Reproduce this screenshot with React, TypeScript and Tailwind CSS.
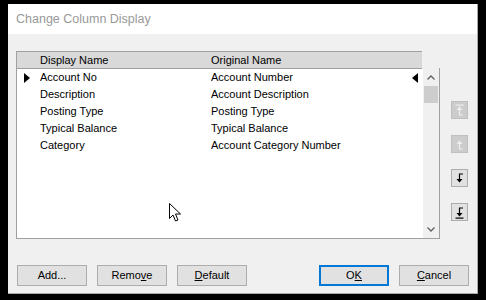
import React from 'react'

const rows = [
  { display: 'Account No', original: 'Account Number' },
  { display: 'Description', original: 'Account Description' },
  { display: 'Posting Type', original: 'Posting Type' },
  { display: 'Typical Balance', original: 'Typical Balance' },
  { display: 'Category', original: 'Account Category Number' },
]

function MoveIcon({ dir, bar, color }: { dir: 'up' | 'down'; bar: boolean; color: string }) {
  if (dir === 'down') {
    return (
      <svg width="11" height="13" viewBox="0 0 11 13">
        <path d="M9 2H5.5V8" stroke={color} strokeWidth="1.2" fill="none" />
        <polygon points="2.5,7 8.5,7 5.5,10.5" fill={color} />
        {bar && <rect x="1.5" y="11.5" width="8" height="1.2" fill={color} />}
      </svg>
    )
  }
  return (
    <svg width="11" height="13" viewBox="0 0 11 13">
      {bar && <rect x="1.5" y="0.5" width="8" height="1.2" fill={color} />}
      <polygon points="2.5,6 8.5,6 5.5,2.5" fill={color} />
      <path d="M5.5 5V11H9" stroke={color} strokeWidth="1.2" fill="none" />
    </svg>
  )
}

function SideButton({ dir, bar, disabled }: { dir: 'up' | 'down'; bar: boolean; disabled?: boolean }) {
  return (
    <div
      className={`w-[17px] h-[18px] flex items-center justify-center border ${
        disabled ? 'bg-[#cccccc] border-[#bfbfbf]' : 'bg-[#e1e1e1] border-[#adadad]'
      }`}
    >
      <MoveIcon dir={dir} bar={bar} color={disabled ? '#eeeeee' : '#000000'} />
    </div>
  )
}

function DialogButton({ children, focused }: { children: React.ReactNode; focused?: boolean }) {
  return (
    <div
      className={`w-[70px] h-[21px] flex items-center justify-center bg-[#e1e1e1] text-[11px] text-black ${
        focused ? 'border-2 border-[#0078d7]' : 'border border-[#adadad]'
      }`}
    >
      {children}
    </div>
  )
}

export default function App() {
  return (
    <div className="w-[486px] h-[300px] bg-black pt-[4px] pl-[8px] relative overflow-hidden font-['Liberation_Sans',Arial,sans-serif]">
      <div className="w-[470px] h-[290px] bg-[#f0f0f0] border-r border-b border-[#a8a8a8] flex flex-col">
        {/* Title bar */}
        <div className="h-[30px] bg-white flex items-center pl-[8px] text-[12.5px] text-[#999999]">
          Change Column Display
        </div>

        <div className="flex pt-[17px] pl-[8px]">
          {/* Grid */}
          <div className="w-[424px] h-[188px] flex flex-col">
            <div className="flex h-[18px]">
              <div className="w-[406px] h-[18px] bg-[#d9d9d9] border-t border-l border-b border-[#a0a0a0] flex items-center text-[11px] text-black">
                <span className="w-[23px]" />
                <span className="w-[171px]">Display Name</span>
                <span>Original Name</span>
              </div>
              <div className="flex-1 border-r border-[#a0a0a0] h-[18px] mt-[17px]" />
            </div>
            <div className="flex flex-1 border-l border-b border-r border-[#a0a0a0]">
              <div className="flex-1 bg-white">
                {rows.map((r, i) => (
                  <div key={r.display} className="h-[17px] flex items-center text-[11px] text-black relative">
                    <span className="w-[23px] flex pl-[7px]">
                      {i === 0 && (
                        <svg width="6" height="10" viewBox="0 0 6 10">
                          <polygon points="0,0 6,5 0,10" fill="#000" />
                        </svg>
                      )}
                    </span>
                    <span className="w-[171px]">{r.display}</span>
                    <span className="flex-1">{r.original}</span>
                    {i === 0 && (
                      <svg className="mr-[5px]" width="6" height="10" viewBox="0 0 6 10">
                        <polygon points="6,0 0,5 6,10" fill="#000" />
                      </svg>
                    )}
                  </div>
                ))}
              </div>
              {/* Scrollbar */}
              <div className="w-[16px] bg-[#f0f0f0] flex flex-col">
                <div className="h-[17px] flex items-center justify-center">
                  <svg width="8" height="5" viewBox="0 0 8 5">
                    <path d="M0.5 4.5L4 1L7.5 4.5" stroke="#606060" strokeWidth="1.3" fill="none" />
                  </svg>
                </div>
                <div className="h-[17px] mx-[1px] bg-[#cdcdcd]" />
                <div className="flex-1" />
                <div className="h-[17px] flex items-center justify-center">
                  <svg width="8" height="5" viewBox="0 0 8 5">
                    <path d="M0.5 0.5L4 4L7.5 0.5" stroke="#606060" strokeWidth="1.3" fill="none" />
                  </svg>
                </div>
              </div>
            </div>
          </div>

          {/* Move buttons */}
          <div className="flex flex-col pl-[11px] pt-[50px] gap-[16px]">
            <SideButton dir="up" bar disabled />
            <SideButton dir="up" bar={false} disabled />
            <SideButton dir="down" bar={false} />
            <SideButton dir="down" bar />
          </div>
        </div>

        {/* Bottom buttons */}
        <div className="flex pl-[9px] pt-[26px]">
          <div className="flex gap-[10px]">
            <DialogButton>Add...</DialogButton>
            <DialogButton>
              Remo<u>v</u>e
            </DialogButton>
            <DialogButton>
              <u>D</u>efault
            </DialogButton>
          </div>
          <div className="flex gap-[10px] ml-[72px]">
            <DialogButton focused>
              O<u>K</u>
            </DialogButton>
            <DialogButton>
              <u>C</u>ancel
            </DialogButton>
          </div>
        </div>
      </div>

      {/* Mouse cursor */}
      <svg className="absolute left-[169px] top-[203px]" width="13" height="19" viewBox="0 0 13 19">
        <path
          d="M0.5 0.5V15.5L4 12L6.5 18L9 17L6.5 11H11.5Z"
          fill="#ffffff"
          stroke="#000000"
          strokeWidth="1"
          strokeLinejoin="round"
        />
      </svg>
    </div>
  )
}
